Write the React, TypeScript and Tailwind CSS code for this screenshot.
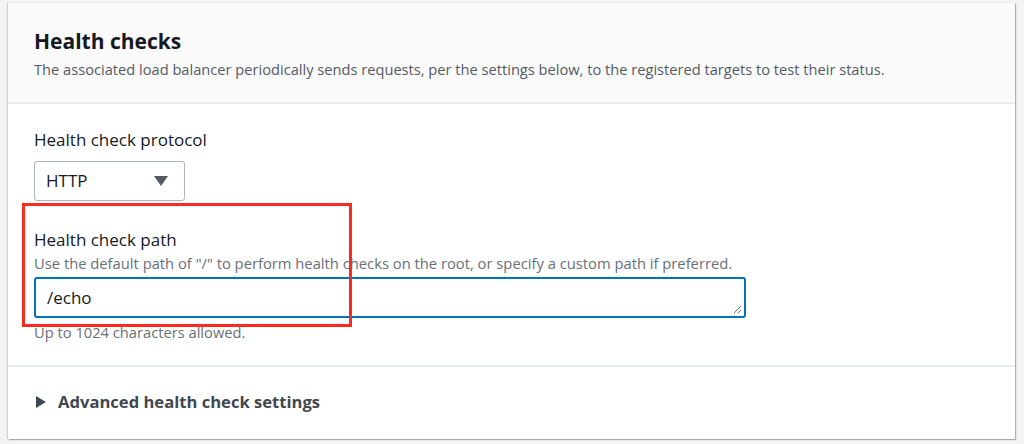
import React from "react";

const font = { fontFamily: '"Open Sans", "Noto Sans", sans-serif' };

export default function App() {
  return (
    <div
      className="h-[444px] w-[1024px] overflow-hidden bg-[#f2f3f3] px-2 pt-[3px]"
      style={font}
    >
      <div className="relative flex h-[436px] w-[1007px] flex-col bg-white shadow-[1px_1px_1px_0_rgba(0,28,36,0.3),-1px_0_1px_0_rgba(0,28,36,0.15)]">
        <div className="h-[101px] border-b-2 border-[#eaeded] bg-[#fafafa] px-[26px] pt-[24px]">
          <h2 className="text-[21px] font-bold leading-[28px] text-[#16191f]">
            Health checks
          </h2>
          <p className="mt-[4px] text-[14.65px] leading-[20px] text-[#545b64]">
            The associated load balancer periodically sends requests, per the
            settings below, to the registered targets to test their status.
          </p>
        </div>

        <div className="h-[263px] border-b-2 border-[#eaeded] px-[26px] pt-[24px]">
          <div className="text-[17px] leading-[24px] text-[#16191f]">
            Health check protocol
          </div>
          <div className="mt-[9px] flex h-[40px] w-[151px] items-center justify-between rounded-[3px] border border-[#aab7b8] pl-[11px] pr-[16px] text-[17px] text-[#16191f]">
            <span>HTTP</span>
            <svg width="14" height="10" viewBox="0 0 14 10">
              <path d="M0 0h14L7 10z" fill="#545b64" />
            </svg>
          </div>

          <div className="mt-[27px] text-[17px] leading-[24px] text-[#16191f]">
            Health check path
          </div>
          <p className="mt-[1px] text-[14.75px] leading-[20px] text-[#687078]">
            Use the default path of "/" to perform health checks on the root,
            or specify a custom path if preferred.
          </p>
          <div className="relative mt-[4px] flex h-[41px] w-[712px] items-center rounded-[3px] border-2 border-[#0073bb] pl-[11px] text-[17px] text-[#16191f]">
            /echo
            <svg
              className="absolute bottom-[2px] right-[2px]"
              width="9"
              height="9"
              viewBox="0 0 9 9"
            >
              <path d="M1 8L8 1M5 8L8 5" stroke="#687078" strokeWidth="1" />
            </svg>
          </div>
          <p className="mt-[5px] text-[14.7px] leading-[18px] text-[#687078]">
            Up to 1024 characters allowed.
          </p>
        </div>

        <div className="flex flex-1 items-center gap-[12px] px-[28px] pb-[2px]">
          <svg width="10" height="12" viewBox="0 0 10 12">
            <path d="M0 0l10 6-10 6z" fill="#414750" />
          </svg>
          <span className="text-[16.6px] font-bold text-[#414750]">
            Advanced health check settings
          </span>
        </div>

        <div className="pointer-events-none absolute left-[14px] top-[200px] h-[124px] w-[330px] border-[3px] border-[#ff2a1f]" />
      </div>
    </div>
  );
}
